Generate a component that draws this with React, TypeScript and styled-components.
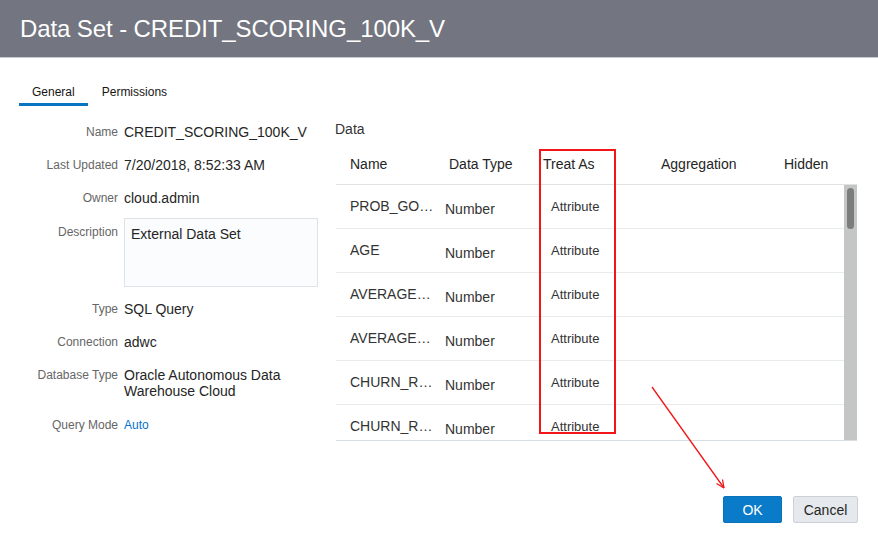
import React from "react";
import styled, { createGlobalStyle } from "styled-components";

const Global = createGlobalStyle`
  html, body { margin: 0; padding: 0; background: #fff; }
  body { font-family: "Liberation Sans", Arial, sans-serif; color: #333; }
  * { box-sizing: border-box; }
`;

const Page = styled.div`
  position: relative;
  width: 878px;
  height: 544px;
  overflow: hidden;
  background: #fff;
  display: flex;
  flex-direction: column;
`;

const Header = styled.header`
  height: 58px;
  flex: none;
  background: #737580;
  border-bottom: 1px solid #c5cad1;
  display: flex;
  align-items: center;
  padding: 0 20px 0;
`;

const Title = styled.h1`
  margin: 0;
  font-size: 24px;
  font-weight: 400;
  color: #fff;
  line-height: 28px;
  letter-spacing: -0.1px;
`;

const Body = styled.div`
  padding: 0 21px 0 19px;
  display: flex;
  flex-direction: column;
`;

const TabBar = styled.div`
  margin-top: 27px;
  display: flex;
`;

const Tab = styled.div<{ $active?: boolean }>`
  font-size: 12px;
  line-height: 14px;
  padding: 0 13px 4px 13px;
  margin-right: 1px;
  color: #161513;
  border-bottom: 3px solid ${(p) => (p.$active ? "#0a76c2" : "transparent")};
`;

const Content = styled.div`
  margin-top: 15px;
  display: flex;
  align-items: flex-start;
  gap: 17px;
`;

const Form = styled.div`
  width: 299px;
  flex: none;
  padding-top: 3px;
  display: grid;
  grid-template-columns: 99px 194px;
  align-content: start;
  column-gap: 6px;
  row-gap: 17px;
  align-items: start;
`;

const Label = styled.div<{ $pt?: number }>`
  font-size: 12px;
  line-height: 16px;
  color: #666;
  text-align: right;
  white-space: nowrap;
  padding-top: ${(p) => p.$pt ?? 0}px;
`;

const Value = styled.div<{ $link?: boolean }>`
  font-size: ${(p) => (p.$link ? "12px" : "14px")};
  line-height: 16px;
  color: ${(p) => (p.$link ? "#0572ce" : "#252525")};
  padding-top: ${(p) => (p.$link ? "1px" : "0")};
`;

const TextArea = styled.div`
  height: 69px;
  margin: -5px 0 -3px;
  border: 1px solid #dfe3e8;
  background: #fbfcfd;
  padding: 7px 6px;
  font-size: 14px;
  line-height: 16px;
  color: #252525;
`;

const DataPanel = styled.div`
  flex: 1;
  display: flex;
  flex-direction: column;
`;

const DataLabel = styled.div`
  font-size: 14px;
  line-height: 16px;
  color: #333;
`;

const Table = styled.div`
  margin: 11px 0 0 1px;
  border-bottom: 1px solid #d6dde3;
`;

const HeadRow = styled.div`
  display: grid;
  grid-template-columns: 99px 94px 118px 123px 74px 13px;
  height: 37px;
  border-bottom: 1px solid #e2e2e2;
  align-items: center;
`;

const HeadCell = styled.div`
  font-size: 14px;
  color: #252525;
  padding-left: 14px;
  padding-bottom: 4px;
  white-space: nowrap;
`;

const BodyWrap = styled.div`
  height: 255px;
  display: flex;
  overflow: hidden;
`;

const Rows = styled.div`
  flex: 1;
`;

const Row = styled.div`
  display: grid;
  grid-template-columns: 99px 94px 118px 197px;
  height: 44px;
  border-bottom: 1px solid #e8ecef;
  align-items: center;
`;

const NameCell = styled.div`
  font-size: 14px;
  color: #333;
  padding: 0 0 1px 14px;
  white-space: nowrap;
  overflow: hidden;
  text-overflow: ellipsis;
`;

const TypeCell = styled.div`
  font-size: 14px;
  color: #333;
  padding: 4px 0 0 10px;
`;

const TreatCell = styled.div`
  font-size: 13px;
  color: #333;
  padding: 0 0 1px 22px;
`;

const Track = styled.div`
  width: 13px;
  flex: none;
  background: #c4c5c5;
  padding: 3px 3px 0;
`;

const Thumb = styled.div`
  width: 7px;
  height: 41px;
  border-radius: 4px;
  background: #7b7c7c;
`;

const Footer = styled.div`
  margin-top: 55px;
  margin-right: -1px;
  display: flex;
  justify-content: flex-end;
  gap: 11px;
`;

const Button = styled.button<{ $primary?: boolean }>`
  height: 27px;
  width: ${(p) => (p.$primary ? "59px" : "65px")};
  font-family: "Liberation Sans", Arial, sans-serif;
  font-size: 14px;
  border-radius: 2px;
  padding: 0;
  cursor: pointer;
  color: ${(p) => (p.$primary ? "#fff" : "#252525")};
  background: ${(p) => (p.$primary ? "#0a7bc8" : "#e5e9ed")};
  border: 1px solid ${(p) => (p.$primary ? "#0a72bb" : "#ccd1d6")};
`;

const HighlightBox = styled.div`
  position: absolute;
  left: 539px;
  top: 149px;
  width: 77px;
  height: 285px;
  border: 2px solid #f2161b;
  pointer-events: none;
`;

const ArrowSvg = styled.svg`
  position: absolute;
  left: 0;
  top: 0;
  pointer-events: none;
`;

const rows = [
  "PROB_GOOD_CREDIT",
  "AGE",
  "AVERAGE_BALANCE",
  "AVERAGE_INCOME",
  "CHURN_RATE_OF_CC1",
  "CHURN_RATE_OF_CC2",
];

export default function App() {
  return (
    <Page>
      <Global />
      <Header>
        <Title>Data Set - CREDIT_SCORING_100K_V</Title>
      </Header>
      <Body>
        <TabBar>
          <Tab $active>General</Tab>
          <Tab>Permissions</Tab>
        </TabBar>
        <Content>
          <Form>
            <Label>Name</Label>
            <Value>CREDIT_SCORING_100K_V</Value>
            <Label>Last Updated</Label>
            <Value>7/20/2018, 8:52:33 AM</Value>
            <Label>Owner</Label>
            <Value>cloud.admin</Value>
            <Label $pt={1}>Description</Label>
            <TextArea>External Data Set</TextArea>
            <Label>Type</Label>
            <Value>SQL Query</Value>
            <Label>Connection</Label>
            <Value>adwc</Value>
            <Label>Database Type</Label>
            <Value>Oracle Autonomous Data Warehouse Cloud</Value>
            <Label $pt={1}>Query Mode</Label>
            <Value $link>Auto</Value>
          </Form>
          <DataPanel>
            <DataLabel>Data</DataLabel>
            <Table>
              <HeadRow>
                <HeadCell>Name</HeadCell>
                <HeadCell>Data Type</HeadCell>
                <HeadCell>Treat As</HeadCell>
                <HeadCell>Aggregation</HeadCell>
                <HeadCell>Hidden</HeadCell>
                <div />
              </HeadRow>
              <BodyWrap>
                <Rows>
                  {rows.map((r) => (
                    <Row key={r}>
                      <NameCell>{r}</NameCell>
                      <TypeCell>Number</TypeCell>
                      <TreatCell>Attribute</TreatCell>
                      <div />
                    </Row>
                  ))}
                </Rows>
                <Track>
                  <Thumb />
                </Track>
              </BodyWrap>
            </Table>
          </DataPanel>
        </Content>
        <Footer>
          <Button $primary>OK</Button>
          <Button>Cancel</Button>
        </Footer>
      </Body>
      <HighlightBox />
      <ArrowSvg width="878" height="544" viewBox="0 0 878 544">
        <line x1="652" y1="387" x2="724" y2="488" stroke="#f01818" strokeWidth="1.3" />
        <path d="M724 488 L716.5 483.5 M724 488 L722.5 479.5" stroke="#f01818" strokeWidth="1.3" fill="none" />
      </ArrowSvg>
    </Page>
  );
}
